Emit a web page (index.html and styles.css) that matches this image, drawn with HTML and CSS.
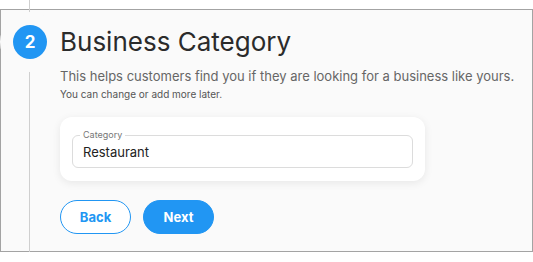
FILE: index.html
```html
<!DOCTYPE html>
<html lang="en">
<head>
<meta charset="utf-8">
<title>Business Category</title>
<link rel="stylesheet" href="styles.css">
</head>
<body>
<div class="panel">
  <div class="gutter">
    <div class="step">2</div>
  </div>
  <div class="content">
    <h1 class="title">Business Category</h1>
    <p class="lead">This helps customers find you if they are looking for a business like yours.</p>
    <p class="note">You can change or add more later.</p>
    <div class="card">
      <div class="field">
        <span class="field-label">Category</span>
        <span class="field-value">Restaurant</span>
      </div>
    </div>
    <div class="actions">
      <button class="btn btn-outline" type="button">Back</button>
      <button class="btn btn-primary" type="button">Next</button>
    </div>
  </div>
</div>
</body>
</html>
```
FILE: styles.css
```css
html, body {
  margin: 0;
  padding: 0;
  background: #ffffff;
}
body {
  font-family: "Inter", "Noto Sans", sans-serif;
  color: #333;
  padding-top: 9px;
}
.panel {
  position: relative;
  box-sizing: border-box;
  width: 533px;
  height: 243px;
  border: 1px solid #a3a3a3;
  background: #fafafa;
  display: flex;
}
.panel::before {
  content: "";
  position: absolute;
  left: 28px;
  top: -10px;
  bottom: -2px;
  width: 1px;
  background: #cfcfcf;
}
.gutter {
  width: 59px;
  flex: none;
  display: flex;
  justify-content: center;
  padding-top: 15px;
  padding-right: 1px;
  box-sizing: border-box;
}
.step {
  position: relative;
  z-index: 1;
  width: 34px;
  height: 34px;
  border-radius: 50%;
  background: #2196f3;
  color: #fff;
  font-weight: 700;
  font-size: 17px;
  display: flex;
  align-items: center;
  justify-content: center;
  box-shadow: 0 0 0 13px #fafafa;
}
.content {
  flex: 1;
  padding-top: 16px;
}
.title {
  margin: 0;
  font-size: 26px;
  line-height: 32px;
  font-weight: 400;
  color: #2b2b2b;
}
.lead {
  margin: 9px 0 0;
  font-size: 13px;
  line-height: 18px;
  color: #666;
}
.note {
  margin: 2px 0 0;
  font-size: 10px;
  line-height: 14px;
  color: #555;
}
.card {
  margin-top: 16px;
  width: 365px;
  box-sizing: border-box;
  background: #fff;
  border-radius: 12px;
  box-shadow: 0 2px 8px rgba(0,0,0,0.08);
  padding: 18px 12px 13px;
}
.field {
  position: relative;
  height: 33px;
  box-sizing: border-box;
  border: 1px solid #dcdcdc;
  border-radius: 6px;
  display: flex;
  align-items: center;
  padding-left: 10px;
}
.field-label {
  position: absolute;
  left: 7px;
  top: -7px;
  padding: 0 3px;
  background: #fff;
  font-size: 9px;
  line-height: 12px;
  color: #777;
}
.field-value {
  font-size: 13px;
  color: #222;
}
.actions {
  margin-top: 19px;
  display: flex;
  gap: 12px;
}
.btn {
  width: 71px;
  height: 34px;
  border-radius: 17px;
  font-family: inherit;
  font-size: 13px;
  font-weight: 700;
  box-sizing: border-box;
  padding: 0;
  cursor: pointer;
}
.btn-outline {
  background: #fff;
  border: 1px solid #2196f3;
  color: #2196f3;
}
.btn-primary {
  background: #2196f3;
  border: 1px solid #2196f3;
  color: #fff;
}
```
